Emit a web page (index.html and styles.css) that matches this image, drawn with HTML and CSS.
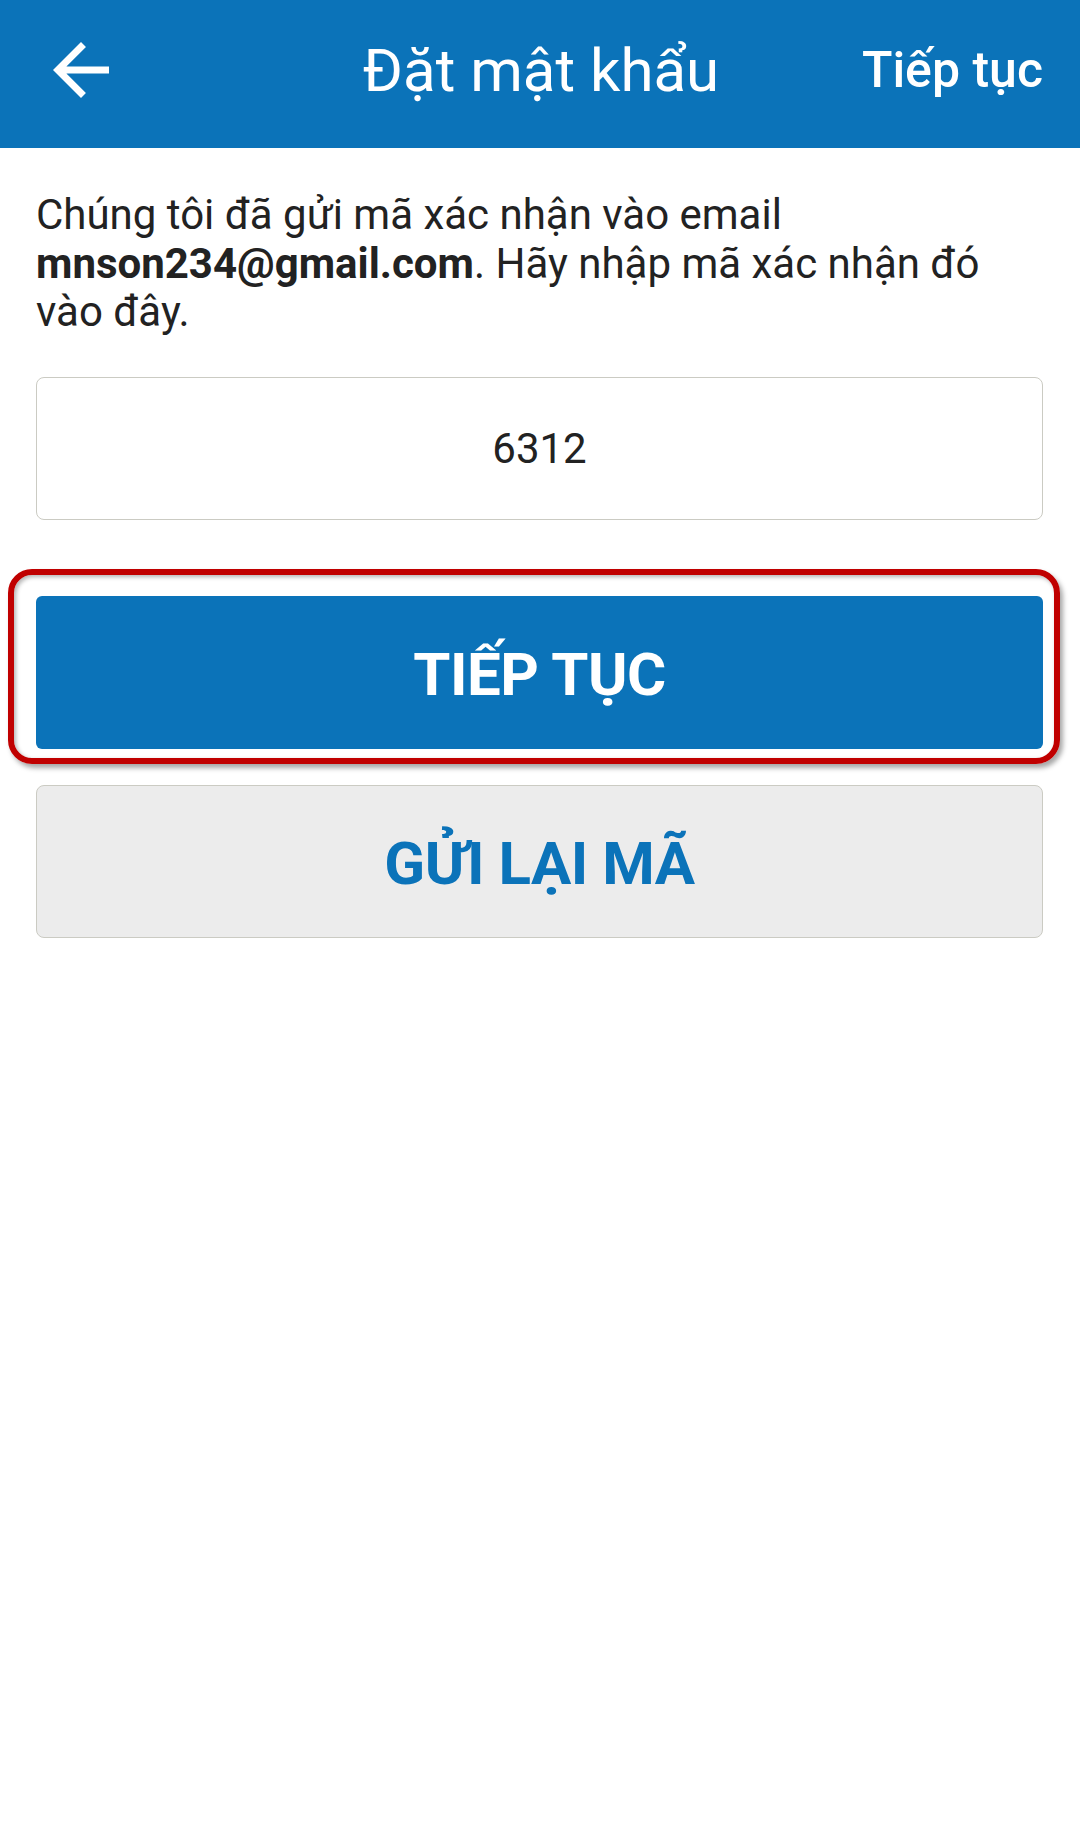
FILE: index.html
```html
<!DOCTYPE html>
<html lang="vi">
<head>
  <meta charset="UTF-8">
  <meta name="viewport" content="width=device-width, initial-scale=1">
  <title>Đặt mật khẩu</title>
  <link rel="stylesheet" href="styles.css">
</head>
<body>

  <header class="topbar">
    <button class="back" aria-label="Quay lại">
      <svg viewBox="0 0 24 24" width="84" height="84">
        <path d="M20 11H7.83l5.59-5.59L12 4l-8 8 8 8 1.41-1.41L7.83 13H20v-2z" fill="#fff"/>
      </svg>
    </button>
    <h1 class="title">Đặt mật khẩu</h1>
    <a class="next" href="#">Tiếp tục</a>
  </header>

  <main class="content">
    <p class="note">Chúng tôi đã gửi mã xác nhận vào email <b>mnson234@gmail.com</b>. Hãy nhập mã xác nhận đó vào đây.</p>

    <div class="code">6312</div>

    <div class="primary-wrap">
      <button class="btn btn-primary">TIẾP TỤC</button>
      <span class="ring"></span>
    </div>

    <button class="btn btn-secondary">GỬI LẠI MÃ</button>
  </main>

</body>
</html>
```

FILE: styles.css
```css
/* Reset ligero */
* { box-sizing: border-box; margin: 0; padding: 0; }

body {
  font-family: Roboto, 'Noto Sans', sans-serif;
  background: #fff;
  color: #222;
}

.topbar {
  height: 148px;
  background: #0b73b9;
  color: #fff;
  display: grid;
  grid-template-columns: 1fr auto 1fr;
  align-items: center;
  padding: 0 37px 8px 39px;
}
.back {
  justify-self: start;
  background: none;
  border: none;
  width: 84px;
  height: 84px;
  display: flex;
}
.title {
  font-size: 60px;
  font-weight: 400;
}
.next {
  justify-self: end;
  color: #fff;
  text-decoration: none;
  font-size: 50px;
  font-weight: 500;
}

.content {
  padding: 43px 37px 0 36px;
  display: flex;
  flex-direction: column;
}
.note {
  font-size: 42px;
  line-height: 48.5px;
  color: #222;
}
.note b { font-weight: 700; }

.code {
  margin-top: 40px;
  height: 143px;
  border: 1.5px solid #cbcbc3;
  border-radius: 8px;
  display: flex;
  align-items: center;
  justify-content: center;
  font-size: 42px;
  color: #222;
}

.primary-wrap {
  position: relative;
  margin-top: 76px;
}
.btn {
  width: 100%;
  height: 153px;
  font-family: Roboto, 'Noto Sans', sans-serif;
  font-size: 60px;
  font-weight: 700;
  letter-spacing: -0.5px;
  display: flex;
  align-items: center;
  justify-content: center;
  cursor: pointer;
}
.btn-primary {
  background: #0b73b9;
  color: #fff;
  border: none;
  border-radius: 6px;
  padding-top: 4px;
}
.btn-secondary {
  margin-top: 36px;
  background: #ececec;
  color: #0b73b9;
  border: 1.5px solid #cbcbc3;
  border-radius: 8px;
  padding-top: 4px;
}

/* anotación roja */
.ring {
  position: absolute;
  top: -27px;
  left: -28px;
  right: -17px;
  bottom: -15px;
  border: 6px solid #c00000;
  border-radius: 24px;
  box-shadow: 3px 4px 5px rgba(0,0,0,0.35), inset 2px 2px 4px rgba(0,0,0,0.3);
  pointer-events: none;
}
```
